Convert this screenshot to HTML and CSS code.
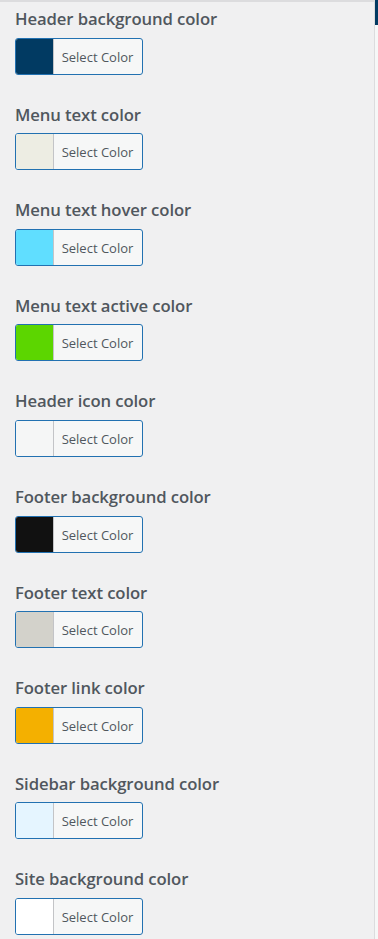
FILE: index.html
```html
<!DOCTYPE html>
<html>
<head>
<meta charset="utf-8">
<link rel="stylesheet" href="styles.css">
</head>
<body>
<div class="page">
  <div class="panel">
    <ul class="controls">
      <li class="control"><span class="title">Header background color</span><button class="color-btn"><span class="swatch" style="background:#013a62"></span><span class="btn-text">Select Color</span></button></li>
      <li class="control"><span class="title">Menu text color</span><button class="color-btn"><span class="swatch" style="background:#edede3"></span><span class="btn-text">Select Color</span></button></li>
      <li class="control"><span class="title">Menu text hover color</span><button class="color-btn"><span class="swatch" style="background:#60deff"></span><span class="btn-text">Select Color</span></button></li>
      <li class="control"><span class="title">Menu text active color</span><button class="color-btn"><span class="swatch" style="background:#5cd600"></span><span class="btn-text">Select Color</span></button></li>
      <li class="control"><span class="title">Header icon color</span><button class="color-btn"><span class="swatch" style="background:#f5f6f6"></span><span class="btn-text">Select Color</span></button></li>
      <li class="control"><span class="title">Footer background color</span><button class="color-btn"><span class="swatch" style="background:#111111"></span><span class="btn-text">Select Color</span></button></li>
      <li class="control"><span class="title">Footer text color</span><button class="color-btn"><span class="swatch" style="background:#d3d2cb"></span><span class="btn-text">Select Color</span></button></li>
      <li class="control"><span class="title">Footer link color</span><button class="color-btn"><span class="swatch" style="background:#f4b000"></span><span class="btn-text">Select Color</span></button></li>
      <li class="control"><span class="title">Sidebar background color</span><button class="color-btn"><span class="swatch" style="background:#e5f5ff"></span><span class="btn-text">Select Color</span></button></li>
      <li class="control"><span class="title">Site background color</span><button class="color-btn"><span class="swatch" style="background:#ffffff"></span><span class="btn-text">Select Color</span></button></li>
    </ul>
  </div>
  <div class="strip"><div class="strip-top"></div></div>
</div>
</body>
</html>
```
FILE: styles.css
```css
html, body {
  margin: 0;
  padding: 0;
  height: 100%;
}
body {
  background: #f0f0f1;
  font-family: "Open Sans", "Noto Sans", sans-serif;
  overflow: hidden;
}
.page {
  display: flex;
  height: 939px;
}
.panel {
  flex: 1;
  border-top: 2px solid #dcdcde;
  border-right: 1px solid #dcdcde;
  background: #f0f0f1;
  padding-left: 15px;
}
.strip {
  width: 3px;
  background: #f6f7f7;
}
.strip-top {
  height: 25px;
  background: #013a62;
}
.controls {
  list-style: none;
  margin: 0;
  padding: 2px 0 0 0;
}
.control {
  display: flex;
  flex-direction: column;
  align-items: flex-start;
  height: 95.6px;
}
.title {
  display: block;
  font-size: 16.7px;
  font-weight: 600;
  line-height: 29.4px;
  color: #50575e;
  margin-bottom: 4.2px;
  letter-spacing: -0.1px;
}
.color-btn {
  display: flex;
  align-items: stretch;
  padding: 0;
  margin: 0;
  width: 128px;
  height: 37px;
  border: 1px solid #2271b1;
  border-radius: 3px;
  background: #f6f7f7;
  overflow: hidden;
  cursor: pointer;
}
.swatch {
  width: 38px;
  flex: none;
  border-right: 1px solid #c3c4c7;
  box-sizing: border-box;
}
.btn-text {
  flex: 1;
  display: flex;
  align-items: center;
  justify-content: center;
  font-family: "Open Sans", "Noto Sans", sans-serif;
  font-size: 13px;
  color: #50575e;
  padding-right: 1px;
  padding-top: 1px;
}
```
